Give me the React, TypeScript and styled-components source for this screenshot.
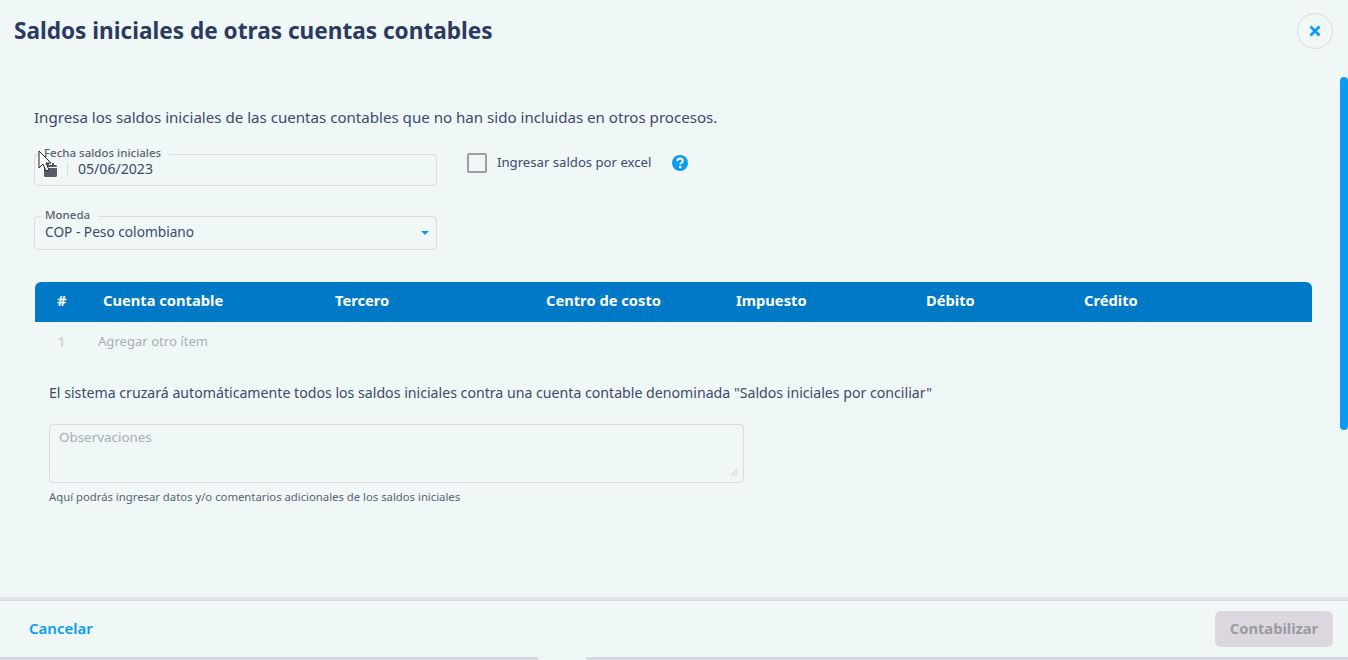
import React from "react";
import styled, { createGlobalStyle } from "styled-components";

const GlobalStyle = createGlobalStyle`
  html, body {
    margin: 0;
    padding: 0;
    height: 660px;
    overflow: hidden;
    background: #eff7f7;
  }
  * {
    box-sizing: border-box;
  }
`;

const Page = styled.div`
  position: relative;
  display: flex;
  flex-direction: column;
  width: 1348px;
  height: 660px;
  background: #eff7f7;
  color: #3d4a6b;
  font-family: "Noto Sans", "Open Sans", sans-serif;
`;

const Header = styled.header`
  display: flex;
  align-items: center;
  justify-content: space-between;
  height: 62px;
  padding: 0 15px 0 14px;
`;

const Title = styled.h1`
  margin: 0 0 2px;
  font-size: 22.6px;
  font-weight: 700;
  color: #2b3a61;
`;

const CloseButton = styled.button`
  display: flex;
  align-items: center;
  justify-content: center;
  width: 36px;
  height: 36px;
  padding: 0;
  border: 1px solid #dcd9e0;
  border-radius: 50%;
  background: transparent;
  color: #0a9cf0;
`;

const Body = styled.main`
  flex: 1;
  padding: 46px 36px 0 34px;
`;

const Intro = styled.p`
  margin: 0 0 28px;
  height: 18px;
  font-size: 15.1px;
  line-height: 18px;
`;

const TopRow = styled.div`
  display: flex;
  gap: 30px;
`;

const Field = styled.div<{ $height: number }>`
  position: relative;
  display: flex;
  align-items: center;
  width: 403px;
  height: ${(p) => p.$height}px;
  border: 1px solid #dcd9e0;
  border-radius: 4px;
`;

const FieldLabel = styled.span<{ $left: number }>`
  position: absolute;
  top: -9px;
  left: ${(p) => p.$left}px;
  padding: 0 8px 0 4px;
  background: #eff7f7;
  font-size: 11.5px;
  line-height: 14px;
  font-weight: 500;
  color: #5c6273;
`;

const DateIcon = styled.span`
  display: flex;
  margin-left: 9px;
  padding-right: 10px;
  border-right: 1px solid #dcd9e0;
  color: #5a5a66;
`;

const FieldValue = styled.span<{ $size: number }>`
  flex: 1;
  padding-left: 10px;
  padding-bottom: 4px;
  font-size: ${(p) => p.$size}px;
`;

const Caret = styled.span`
  width: 0;
  height: 0;
  margin-right: 7px;
  border-left: 4px solid transparent;
  border-right: 4px solid transparent;
  border-top: 4px solid #0a9cf0;
`;

const CheckRow = styled.label`
  display: flex;
  align-items: center;
  height: 18px;
  font-size: 13.15px;
`;

const CheckBox = styled.span`
  width: 20px;
  height: 20px;
  margin-right: 10px;
  border: 2px solid #9c9fa3;
  border-radius: 2px;
`;

const CheckText = styled.span`
  margin-bottom: 2px;
`;

const HelpIcon = styled.span`
  display: flex;
  margin-left: 21px;
  color: #0a9cf0;
`;

const CurrencyRow = styled.div`
  margin: 30px 0 32px;
`;

const TableHead = styled.div`
  display: grid;
  grid-template-columns: 68px 232px 211px 190px 190px 158px 1fr;
  align-items: center;
  width: 1277px;
  height: 40px;
  margin-left: 1px;
  padding-bottom: 5px;
  border-radius: 6px 6px 0 0;
  background: #007ac7;
  color: #fff;
  font-size: 14.7px;
  font-weight: 700;
`;

const HeadCell = styled.span<{ $first?: boolean }>`
  padding-left: ${(p) => (p.$first ? 22 : 0)}px;
`;

const AddRow = styled.div`
  display: flex;
  align-items: center;
  height: 38px;
  padding-left: 23px;
  font-size: 13.1px;
  color: #a9aeb6;
`;

const RowNumber = styled.span`
  width: 41px;
  color: #d3d2d8;
  font-size: 15px;
  font-weight: 600;
`;

const Note = styled.p`
  margin: 24px 0 22px 15px;
  height: 18px;
  font-size: 14.15px;
  line-height: 18px;
`;

const Notes = styled.div`
  position: relative;
  width: 695px;
  height: 59px;
  margin-left: 15px;
  padding: 3px 9px;
  border: 1px solid #dcd9e0;
  border-radius: 4px;
  font-size: 13.4px;
  color: #a9aeb6;
`;

const ResizeGrip = styled.svg`
  position: absolute;
  right: 5px;
  bottom: 6px;
`;

const Hint = styled.p`
  margin: 6px 0 0 15px;
  font-size: 11.3px;
  line-height: 15px;
  color: #5c6273;
`;

const Footer = styled.footer`
  display: flex;
  align-items: center;
  justify-content: space-between;
  height: 57px;
  padding: 0 15px 0 29px;
  border-top: 1px solid #d9d6df;
  box-shadow: 0 -3px 0 #e0e7e9;
`;

const CancelLink = styled.a`
  margin-bottom: 2px;
  font-size: 15px;
  font-weight: 600;
  color: #0a9cf0;
`;

const SubmitButton = styled.button`
  width: 118px;
  height: 36px;
  padding: 0 0 2px;
  border: 0;
  border-radius: 6px;
  background: #dcd6de;
  color: #9a9ca0;
  font-family: inherit;
  font-size: 14.7px;
  font-weight: 700;
`;

const BottomStrip = styled.div`
  display: flex;
  justify-content: space-between;
  height: 3px;
  flex-shrink: 0;
`;

const StripPart = styled.span<{ $width: number }>`
  width: ${(p) => p.$width}px;
  background: #d5d8df;
`;

const Scrollbar = styled.div`
  position: absolute;
  top: 77px;
  right: 0;
  width: 8px;
  height: 353px;
  border-radius: 4px;
  background: #0a9cf0;
`;

const Cursor = styled.svg`
  position: absolute;
  top: 150px;
  left: 38px;
`;

const columns = [
  "#",
  "Cuenta contable",
  "Tercero",
  "Centro de costo",
  "Impuesto",
  "Débito",
  "Crédito",
];

export default function App() {
  return (
    <Page>
      <GlobalStyle />
      <Header>
        <Title>Saldos iniciales de otras cuentas contables</Title>
        <CloseButton aria-label="Cerrar">
          <svg width="14" height="14" viewBox="0 0 14 14">
            <path d="M2.500 2.500l9 9M11.500 2.500l-9 9" stroke="currentColor" strokeWidth="2.8" />
          </svg>
        </CloseButton>
      </Header>
      <Body>
        <Intro>
          Ingresa los saldos iniciales de las cuentas contables que no han sido
          incluidas en otros procesos.
        </Intro>
        <TopRow>
          <Field $height={32}>
            <FieldLabel $left={5}>Fecha saldos iniciales</FieldLabel>
            <DateIcon>
              <svg width="13" height="14" viewBox="0 0 13 14" fill="currentColor">
                <path d="M0 5h13v7.500a1.500 1.500 0 0 1-1.500 1.500h-10A1.500 1.500 0 0 1 0 12.500zM1.500 2H3V0h2v2h3V0h2v2h1.500A1.500 1.500 0 0 1 13 3.500V4H0v-.5A1.500 1.500 0 0 1 1.500 2z" />
              </svg>
            </DateIcon>
            <FieldValue $size={14.1}>05/06/2023</FieldValue>
          </Field>
          <CheckRow>
            <CheckBox />
            <CheckText>Ingresar saldos por excel</CheckText>
            <HelpIcon>
              <svg width="16" height="16" viewBox="0 0 16 16">
                <circle cx="8" cy="8" r="8" fill="currentColor" />
                <path
                  d="M5.300 6.200C5.400 4.600 6.500 3.600 8 3.600s2.700.9 2.700 2.400c0 2-2.500 1.900-2.500 3.600"
                  fill="none"
                  stroke="#fff"
                  strokeWidth="2"
                />
                <circle cx="8.200" cy="12.100" r="1.300" fill="#fff" />
              </svg>
            </HelpIcon>
          </CheckRow>
        </TopRow>
        <CurrencyRow>
          <Field $height={34}>
            <FieldLabel $left={6}>Moneda</FieldLabel>
            <FieldValue $size={13.7}>COP - Peso colombiano</FieldValue>
            <Caret />
          </Field>
        </CurrencyRow>
        <TableHead>
          {columns.map((column, index) => (
            <HeadCell key={column} $first={index === 0}>
              {column}
            </HeadCell>
          ))}
        </TableHead>
        <AddRow>
          <RowNumber>1</RowNumber>
          Agregar otro ítem
        </AddRow>
        <Note>
          El sistema cruzará automáticamente todos los saldos iniciales contra
          una cuenta contable denominada "Saldos iniciales por conciliar"
        </Note>
        <Notes>
          Observaciones
          <ResizeGrip width="7" height="7" viewBox="0 0 7 7">
            <path d="M0.500 6.500l6-6M4 6.500l2.500-2.500" stroke="#c4c4ca" strokeWidth="1" />
          </ResizeGrip>
        </Notes>
        <Hint>Aquí podrás ingresar datos y/o comentarios adicionales de los saldos iniciales</Hint>
      </Body>
      <Footer>
        <CancelLink>Cancelar</CancelLink>
        <SubmitButton disabled>Contabilizar</SubmitButton>
      </Footer>
      <BottomStrip>
        <StripPart $width={538} />
        <StripPart $width={762} />
      </BottomStrip>
      <Scrollbar />
      <Cursor width="16" height="24" viewBox="0 0 16 24">
        <path d="M1 1v17l4-4 3 7 3-1-3-7h5z" fill="#fff" stroke="#222" strokeWidth="1" />
      </Cursor>
    </Page>
  );
}
